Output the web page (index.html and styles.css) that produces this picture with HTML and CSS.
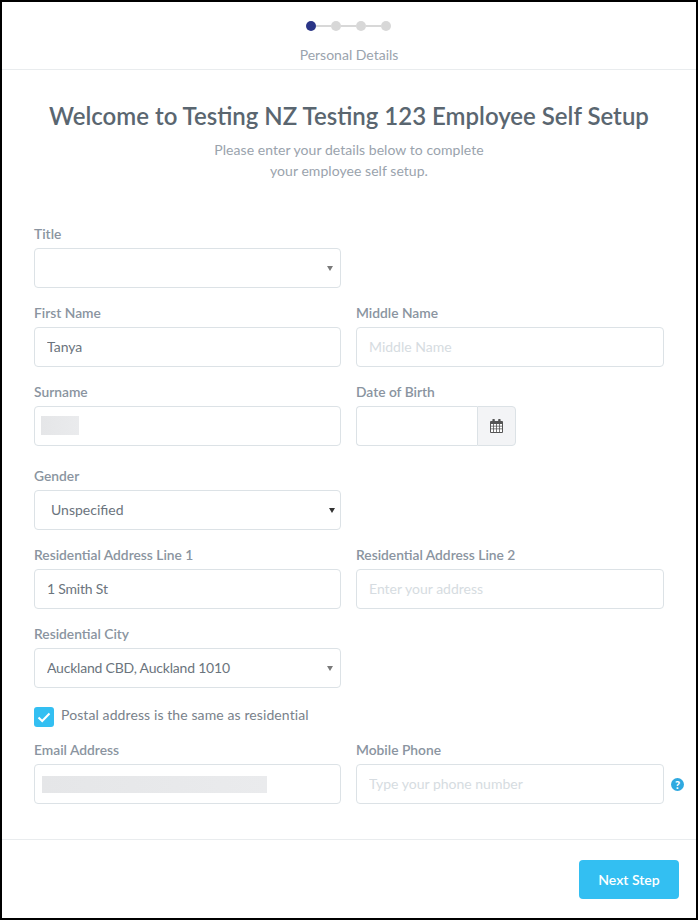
FILE: index.html
```html
<html>

<head>
  <title>Employee Self Setup</title>
  <link rel="stylesheet" href="styles.css">
</head>

<body>
  <div class="setup_box">

    <div class="steps">
      <div class="dots">
        <span class="dot active"></span>
        <span class="line"></span>
        <span class="dot"></span>
        <span class="line"></span>
        <span class="dot"></span>
        <span class="line"></span>
        <span class="dot"></span>
      </div>
      <p>Personal Details</p>
    </div>

    <header>
      <h1>Welcome to Testing NZ Testing 123 Employee Self Setup</h1>
      <p>Please enter your details below to complete<br>your employee self setup.</p>
    </header>

    <form class="form">
      <div class="row">
        <div class="field">
          <label>Title</label>
          <div class="select small"><select></select></div>
        </div>
      </div>

      <div class="row">
        <div class="field">
          <label>First Name</label>
          <input type="text" value="Tanya">
        </div>
        <div class="field">
          <label>Middle Name</label>
          <input type="text" placeholder="Middle Name">
        </div>
      </div>

      <div class="row">
        <div class="field">
          <label>Surname</label>
          <input type="text">
          <span class="blur surname"></span>
        </div>
        <div class="field">
          <label>Date of Birth</label>
          <div class="date">
            <input type="text">
            <span class="addon">
              <svg width="13" height="14" viewBox="0 0 13 14">
                <path fill="#555" d="M3 0h1.2a.6.6 0 0 1 .6.6V2h3.4V.6A.6.6 0 0 1 8.800 0H10a.6.6 0 0 1 .6.6V2h1.400a1 1 0 0 1 1 1v10a1 1 0 0 1-1 1H1a1 1 0 0 1-1-1V3a1 1 0 0 1 1-1h1.400V.6A.6.6 0 0 1 3 0z"/>
                <path fill="#fff" d="M1 5h2.200v1.800H1zM4 5h2.100v1.800H4zM6.900 5H9v1.800H6.900zM9.800 5H12v1.800H9.800zM1 7.600h2.200v1.900H1zM4 7.600h2.100v1.900H4zM6.900 7.600H9v1.900H6.900zM9.800 7.600H12v1.900H9.800zM1 10.300h2.200V13H1zM4 10.300h2.100V13H4zM6.900 10.300H9V13H6.900zM9.800 10.300H12V13H9.800z"/>
              </svg>
            </span>
          </div>
        </div>
      </div>

      <div class="row gender">
        <div class="field">
          <label>Gender</label>
          <div class="select native"><select><option>Unspecified</option></select></div>
        </div>
      </div>

      <div class="row">
        <div class="field">
          <label>Residential Address Line 1</label>
          <input class="addr" type="text" value="1 Smith St">
        </div>
        <div class="field">
          <label>Residential Address Line 2</label>
          <input type="text" placeholder="Enter your address">
        </div>
      </div>

      <div class="row">
        <div class="field">
          <label>Residential City</label>
          <div class="select small"><select class="addr"><option>Auckland CBD, Auckland 1010</option></select></div>
        </div>
      </div>

      <div class="check">
        <span class="box">
          <svg width="14" height="11" viewBox="0 0 14 11">
            <path d="M1.500 5.500l3.700 3.500 7.300-7.500" fill="none" stroke="#fff" stroke-width="2"/>
          </svg>
        </span>
        <span>Postal address is the same as residential</span>
      </div>

      <div class="row">
        <div class="field">
          <label>Email Address</label>
          <input type="text">
          <span class="blur email"></span>
        </div>
        <div class="field">
          <label>Mobile Phone</label>
          <input type="text" placeholder="Type your phone number">
          <span class="help">?</span>
        </div>
      </div>
    </form>

    <div class="foot">
      <button type="button">Next Step</button>
    </div>

  </div>
</body>

</html>
```

FILE: styles.css
```css
* {
  margin: 0;
  box-sizing: border-box;
  font-family: Lato, "Liberation Sans", Arial, sans-serif;
}

body {
  background: #fff;
}

.setup_box {
  width: 698px;
  height: 920px;
  border: 2px solid #000;
  background: #fff;
}

/* step indicator */
.steps {
  height: 68px;
  padding-top: 19px;
  border-bottom: 1px solid #e9ecee;
  text-align: center;
}

.dots {
  display: flex;
  align-items: center;
  justify-content: center;
  height: 10px;
  padding-right: 1px;
}

.dot {
  width: 10px;
  height: 10px;
  border-radius: 50%;
  background: #d8d8d8;
}

.dot.active {
  background: #2a3587;
}

.line {
  width: 15px;
  height: 2px;
  background: #d8d8d8;
}

.steps p {
  margin-top: 15px;
  font-size: 14px;
  line-height: 18px;
  color: #9aa3ad;
}

header {
  text-align: center;
  padding-top: 30px;
}

header h1 {
  font-size: 24px;
  line-height: 32px;
  font-weight: 600;
  color: #5a6670;
}

header p {
  margin-top: 7px;
  font-size: 14px;
  line-height: 21px;
  letter-spacing: 0.05px;
  color: #9aa3ad;
}

.form {
  padding: 44px 32px 19px;
}

.row {
  display: grid;
  grid-template-columns: 307px 308px;
  column-gap: 15px;
  margin-bottom: 16px;
}

.row.gender {
  margin-top: 21px;
}

.field {
  position: relative;
}

.field label {
  display: block;
  height: 23px;
  font-size: 13.800px;
  line-height: 18px;
  font-weight: 600;
  color: #8a94a0;
}

input, select {
  display: block;
  width: 100%;
  height: 40px;
  padding: 0 12px 2px;
  border: 1px solid #dce2e6;
  border-radius: 4px;
  background: #fff;
  font-size: 14px;
  color: #6b747d;
  outline: none;
}

.addr {
  letter-spacing: -0.2px;
}

input::placeholder {
  color: #d6dce1;
}

.select {
  position: relative;
}

.select select {
  appearance: none;
  -webkit-appearance: none;
}

.select::after {
  content: "";
  position: absolute;
  top: 18px;
  right: 8px;
  border-left: 3px solid transparent;
  border-right: 3px solid transparent;
  border-top: 5px solid #7a7a7a;
}

.select.native select {
  padding-left: 16px;
}

.select.native::after {
  right: 6px;
  border-left-width: 3.500px;
  border-right-width: 3.500px;
  border-top-color: #333;
}

.date {
  display: flex;
  width: 160px;
}

.date input {
  flex: 1;
  min-width: 0;
  border-right: none;
  border-radius: 4px 0 0 4px;
}

.addon {
  display: flex;
  align-items: center;
  justify-content: center;
  width: 39px;
  height: 40px;
  background: #f3f4f6;
  border: 1px solid #dce2e6;
  border-radius: 0 4px 4px 0;
}

/* blurred out personal data */
.blur {
  position: absolute;
  background: linear-gradient(90deg, #e5e6e8, #eaebed);
}

.blur.surname {
  left: 7px;
  top: 33px;
  width: 38px;
  height: 19px;
}

.blur.email {
  left: 8px;
  top: 35px;
  width: 225px;
  height: 17px;
}

.help {
  position: absolute;
  top: 37px;
  right: -20px;
  width: 13px;
  height: 13px;
  border-radius: 50%;
  background: #2fa9e0;
  color: #fff;
  font-size: 11px;
  line-height: 13px;
  font-weight: 900;
  text-align: center;
}

.check {
  display: flex;
  align-items: center;
  gap: 7px;
  height: 20px;
  margin: 19px 0 14px;
  font-size: 14px;
  letter-spacing: 0.1px;
  color: #79828b;
}

.check span:last-child {
  margin-top: -5px;
}

.box {
  display: flex;
  align-items: center;
  justify-content: center;
  width: 20px;
  height: 20px;
  border-radius: 3px;
  background: #33bff2;
}

.foot {
  display: flex;
  justify-content: flex-end;
  border-top: 1px solid #e9ecee;
  padding: 20px 17px 0 0;
}

.foot button {
  width: 100px;
  height: 39px;
  border: none;
  border-radius: 4px;
  background: #33bff2;
  color: #fff;
  font-size: 14px;
  font-weight: 600;
}
```
